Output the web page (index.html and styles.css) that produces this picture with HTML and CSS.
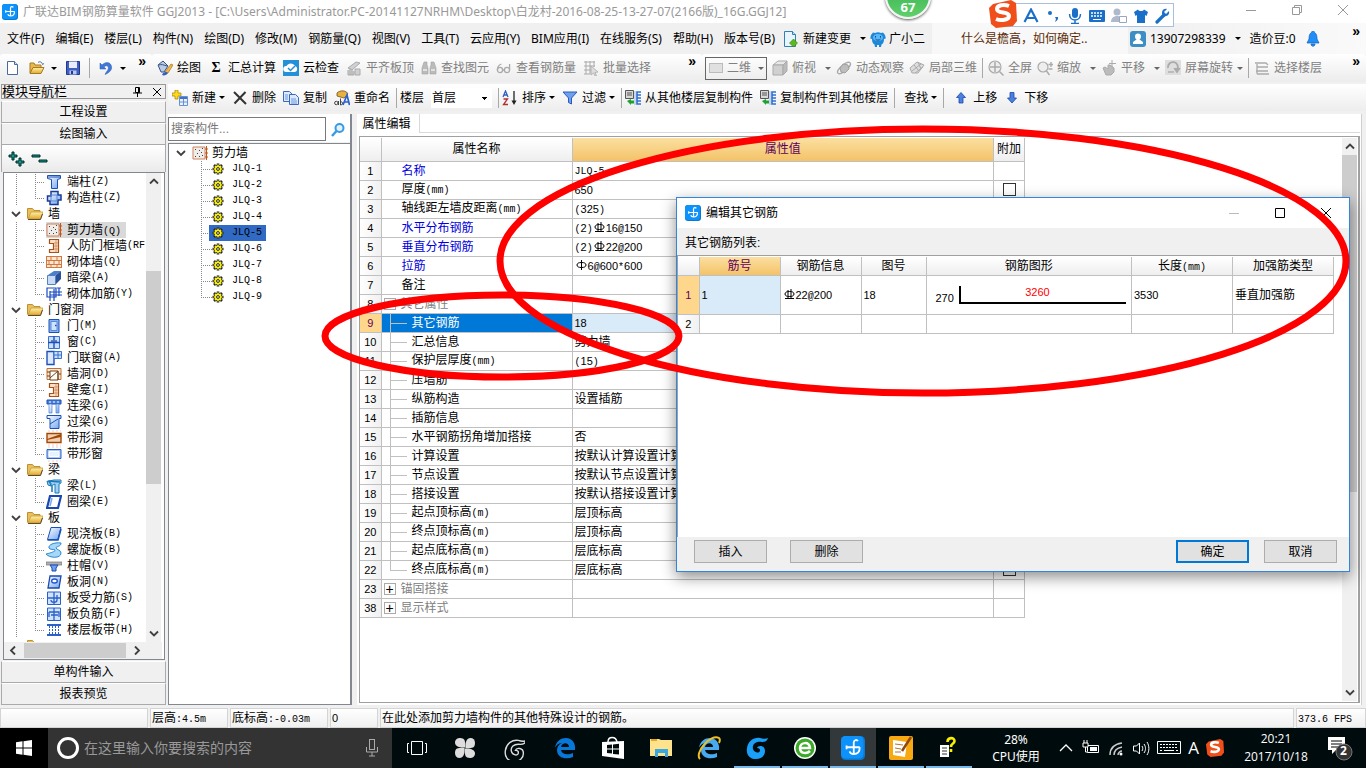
FILE: index.html
```html
<!DOCTYPE html>
<html lang="zh-CN">
<head>
<meta charset="utf-8">
<title>广联达BIM钢筋算量软件 GGJ2013</title>
<link rel="stylesheet" href="styles.css">
</head>
<body>
<svg class="defs" aria-hidden="true">
<defs>
<linearGradient id="blue" x1="0" y1="0" x2="1" y2="1"><stop offset="0" stop-color="#fff"/><stop offset="1" stop-color="#6ea4f0"/></linearGradient>
<linearGradient id="gold" x1="0" y1="0" x2="0" y2="1"><stop offset="0" stop-color="#fff0a8"/><stop offset="1" stop-color="#e3a82c"/></linearGradient>
</defs>
<symbol id="app" viewBox="0 0 16 16"><rect width="16" height="16" rx="3" fill="#0b78d0"/><rect width="15" height="15" rx="3" fill="#0c92fa"/><path d="M8.500 4v7.500M3.500 7.500h9M8.500 4c.3-1.500 2-1.800 2.800-.6M3.700 6.300v2.500M12.500 7.500c0 3-1.500 4.500-4 4.500-1.500 0-2.500-.6-2.700-1.800" fill="none" stroke="#fff" stroke-width="1.200"/></symbol>
<symbol id="new" viewBox="0 0 16 16"><path d="M2.500 1.500h7l3 3v10h-10z" fill="#fff" stroke="#4a6a9a"/><path d="M9.500 1.500v3h3" fill="#cfe0f5" stroke="#4a6a9a"/></symbol>
<symbol id="open" viewBox="0 0 16 16"><path d="M1 13V3h4l1 2h6v3" fill="#e8b84a" stroke="#a87a20"/><path d="M1 13.500l3-6h11l-3 6z" fill="url(#gold)" stroke="#a87a20"/><path d="M9 2.500c2-1.500 4-.5 4.500 2l1.500-1" fill="none" stroke="#4a6a9a"/></symbol>
<symbol id="folder" viewBox="0 0 16 16"><path d="M.5 12.500v-10h5l1.500 2h6v3" fill="#e8c060" stroke="#c09030"/><path d="M1 13l3-7h12l-2.500 7z" fill="url(#gold)" stroke="#c89a35" stroke-width=".8"/><path d="M1 13.500h12.500L15.500 8" fill="none" stroke="#4a3a20" stroke-width=".9"/></symbol>
<symbol id="save" viewBox="0 0 16 16"><path d="M1.500 1.500h13v13h-13z" fill="#4060c0" stroke="#203a90"/><path d="M4 1.500h8V8H4z" fill="#e8eefc"/><path d="M4.500 10.500h7v4h-7z" fill="#b8c8f0"/><path d="M6 11h2v3H6z" fill="#203a90"/></symbol>
<symbol id="undo" viewBox="0 0 16 16"><path d="M2 3v6h6L6 7c3-3 6 0 3.500 3.500C8.500 12 7.500 13 7 14.500 12 12.500 15 9 13 5 11 1.500 7 2 4 5z" fill="#3f78d8" stroke="#2858b0" stroke-width=".5"/></symbol>
<symbol id="paint" viewBox="0 0 16 16"><path d="M1 5l5-4 5 5-4 6H4z" fill="#b8cce8" stroke="#3a5080"/><path d="M2 5c2-1 5 0 8 1" stroke="#3a5080" fill="none"/><path d="M8 12l6-8 2 1-5 8z" fill="#f5b840" stroke="#906010" stroke-width=".6"/><path d="M5 15c1-3 4-4 6-2-1 2-4 3-6 2z" fill="#345fc0"/></symbol>
<symbol id="cloud" viewBox="0 0 16 16"><rect width="16" height="16" fill="#2490d8"/><path d="M3 12a3 3 0 01.5-6C5 2.500 10.500 2.500 12 6c3 .5 3 6-.5 6z" fill="#fff"/><path d="M5 8l2.500 2.500L12 6" fill="none" stroke="#2490d8" stroke-width="1.500"/></symbol>
<symbol id="gslab" viewBox="0 0 16 16"><path d="M2 8l8-6 4 1-8 7zM2 10v5h6v-4M9 9h5v6H9z" fill="#d0d0d0" stroke="#aaa"/><path d="M4 8v7M6 9v6" stroke="#aaa"/></symbol>
<symbol id="gbino" viewBox="0 0 16 16"><path d="M3 2h3v3l1 3v6H1V8zM10 2h3l2 6v6H9V8l1-3z" fill="#bbb" stroke="#a2a2a2" stroke-width=".6"/><path d="M2 10h4M10 10h4M7 7h2" stroke="#eee" stroke-width="1.500"/></symbol>
<symbol id="gglass" viewBox="0 0 16 16"><circle cx="4" cy="10" r="2.600" fill="none" stroke="#aaa" stroke-width="1.300"/><circle cx="11" cy="10" r="2.600" fill="none" stroke="#aaa" stroke-width="1.300"/><path d="M6.600 10h2M1.400 10c0-3 1-5 4-6M13.600 10V4" fill="none" stroke="#aaa" stroke-width="1.300"/></symbol>
<symbol id="ggrid" viewBox="0 0 16 16"><path d="M1 2h11M1 6h11M1 10h7M1 14h6M3 1v13M7 1v13M11 1v6" stroke="#aaa" fill="none"/><path d="M8 6l7 6-3 .5 1.500 3-1.500.5-1.500-3L8 15z" fill="#ddd" stroke="#aaa" stroke-width=".8"/></symbol>
<symbol id="gcube" viewBox="0 0 16 16"><path d="M1 5l5-4h9l-4 4z" fill="#e8e8e8" stroke="#aaa"/><path d="M1 5h10v10H1z" fill="#d0d0d0" stroke="#aaa"/><path d="M11 5l4-4v10l-4 4z" fill="#bbb" stroke="#aaa"/></symbol>
<symbol id="gorbit" viewBox="0 0 16 16"><ellipse cx="8" cy="8" rx="8" ry="3" transform="rotate(-40 8 8)" fill="none" stroke="#aaa" stroke-width="1.300"/><path d="M4 8l3-4 5 1 1 4-4 4-4-1z" fill="#bdbdbd" stroke="#a0a0a0"/></symbol>
<symbol id="gpart" viewBox="0 0 16 16"><path d="M1 8l7-6 7 3-6 8-6 0z" fill="#ddd" stroke="#aaa"/><path d="M5 5l5 6M9 2l3 7M3 11l9-7M6 13l8-6" stroke="#aaa"/></symbol>
<symbol id="gfull" viewBox="0 0 16 16"><circle cx="7" cy="7" r="6" fill="#eee" stroke="#aaa" stroke-width="1.200"/><path d="M7 2v10M2 7h10M11.500 11.500l4 4" stroke="#aaa" stroke-width="1.500"/></symbol>
<symbol id="gzoom" viewBox="0 0 16 16"><circle cx="6" cy="7" r="5" fill="#eee" stroke="#aaa" stroke-width="1.200"/><path d="M9.500 11l3 4M14 2v5M11.500 4.500h5M11.500 9h4" stroke="#aaa" stroke-width="1.400"/></symbol>
<symbol id="gpan" viewBox="0 0 16 16"><path d="M2 8l2-1 3 2V5h2l4 3v4l-3 3H5z" fill="#bbb" stroke="#aaa"/><path d="M11 0v7M8 3.500h7" stroke="#aaa"/></symbol>
<symbol id="grot" viewBox="0 0 16 16"><rect width="16" height="15" fill="#dedede"/><path d="M3 8a5 5 0 119 2M12 12l-2-3h4z" fill="none" stroke="#aaa" stroke-width="1.800"/><path d="M3 12h6" stroke="#999"/></symbol>
<symbol id="gfloor" viewBox="0 0 16 16"><path d="M1 3h11l2 2M3 7h11M2 11h12M3 14h12M3 4v10" stroke="#aaa" fill="none" stroke-width="1.300"/></symbol>
<symbol id="add" viewBox="0 0 16 16"><path d="M3 0h3v3h3v3H6v3H3V6H0V3h3z" fill="#ffd820" stroke="#a88000" stroke-width=".7"/><path d="M7.500 6.500h8v9h-8z" fill="#eaf2ff" stroke="#6a90d0"/><path d="M8 7h7v2H8z" fill="#3f70d0"/><path d="M8 12h7M11.500 9v6" stroke="#6a90d0"/></symbol>
<symbol id="del" viewBox="0 0 16 16"><path d="M2 2l12 12M13.500 2L2.500 13.500" stroke="#333" stroke-width="2"/></symbol>
<symbol id="copy" viewBox="0 0 16 16"><path d="M.5 1.500h6l3 3v7h-9z" fill="#dce9ff" stroke="#3a6ac0"/><path d="M6.500 4.500h6l3 3v7h-9z" fill="#dce9ff" stroke="#3a6ac0"/><path d="M8 9h5M8 11h6M8 13h6M2 5h3M2 7h3M2 9h3" stroke="#6a98e0"/></symbol>
<symbol id="ren" viewBox="0 0 16 16"><path d="M3 3c3-3 9-3 11 1l-4 4-7-2z" fill="#e8b040" stroke="#70501a" stroke-width=".8"/><circle cx="2.300" cy="13" r="1.700" fill="none" stroke="#444"/><path d="M4.500 11v4M6.500 8.500v6.500M6.500 12c2.500-1 3 3 0 3" fill="none" stroke="#444"/><path d="M9 15l4-10 2.500 10M10.500 12h4" fill="none" stroke="#2a60d0" stroke-width="1.700"/></symbol>
<symbol id="sort" viewBox="0 0 16 16"><path d="M1 7l2.500-6L6 7M2 5h3" fill="none" stroke="#2f5fc0" stroke-width="1.300"/><path d="M1.500 9h4l-4 5.500h4.500" fill="none" stroke="#b03030" stroke-width="1.300"/><path d="M12 1v12" stroke="#222" stroke-width="1.300"/><path d="M9.500 10.500h5L12 15z" fill="#222"/></symbol>
<symbol id="filter" viewBox="0 0 16 16"><path d="M1 2h14l-5.500 6v6l-3-1.500V8z" fill="#6fa0ec" stroke="#2a5ac0"/></symbol>
<symbol id="floorcp" viewBox="0 0 16 16"><path d="M.5.500h8v8h-8z" fill="#d8d8d8" stroke="#555"/><path d="M2 3h5M2 5h5" stroke="#555"/><path d="M16 2h-4v12h4M12 5h4M12 8h4M12 11h4" stroke="#2f70d0" fill="none" stroke-width="1.600"/><path d="M10 1v14" stroke="#9ab8e8"/><path d="M2 11l4-2v1.500h3v3H6V15z" fill="#20a030"/></symbol>
<symbol id="up" viewBox="0 0 16 16"><path d="M8 2.500l4.500 5H10V13H6V7.500H3.500z" fill="#4a80e0" stroke="#1a48a8" stroke-width=".8"/></symbol>
<symbol id="down" viewBox="0 0 16 16"><path d="M8 13l4.500-5H10V2.500H6V8H3.500z" fill="#4a80e0" stroke="#1a48a8" stroke-width=".8"/></symbol>
<symbol id="doc" viewBox="0 0 16 16"><path d="M1.500.5h8l3 3v12h-11z" fill="#e8f4ff" stroke="#3080b0"/><path d="M9.500.5v3h3" fill="#bfe0f5" stroke="#3080b0"/><path d="M10.500 8l4 4-4 4-4-4z" fill="#5cb81c" stroke="#2a8000" stroke-width=".6"/></symbol>
<symbol id="mascot" viewBox="0 0 16 16"><path d="M1 4l2-2.500L5 2c2-1 4-1 6 0l2-.5L15 4l.8 3.500L14 8c0 3-.8 4.500-2.500 5.500L11 16H9v-2H7v2H5l-.5-2.500C2.800 12.500 2 11 2 8L.2 7.500z" fill="#1e88d8"/><ellipse cx="8" cy="6.500" rx="5" ry="3.600" fill="#58b8f8"/><path d="M5.500 5v1.500M10.500 5v1.500M5.500 8c1 1.500 4 1.500 5 0" stroke="#104880" fill="none"/></symbol>
<symbol id="user" viewBox="0 0 16 16"><rect width="16" height="16" rx="3" fill="#3c8fc4"/><path d="M8 2.500a3 3 0 013 3c0 1.500-.8 2.500-1.500 3L13 11v2H3v-2l3.500-2.500C5.800 8 5 7 5 5.500a3 3 0 013-3z" fill="#fff"/></symbol>
<symbol id="bell" viewBox="0 0 16 16"><path d="M8 0c1 0 1.500.8 1.500 1.500C11.500 2.500 12 5 12 8l2 4H2l2-4c0-3 .5-5.500 2.500-6.500C6.500.8 7 0 8 0zM6 13h4c0 3-4 3-4 0z" fill="#2090f8" stroke="#1060b8" stroke-width=".7"/></symbol>
<symbol id="chev" viewBox="0 0 10 10"><path d="M1 3l4 4 4-4" fill="none" stroke="#404040" stroke-width="1.800"/></symbol>
<symbol id="wall" viewBox="0 0 16 16"><path d="M1 2h12v12H1z" fill="#f0ece8" stroke="#d08060"/><path d="M3 4h1v1H3zM7 5h1v1H7zM5 8h1v1H5zM9 7h1v1H9zM3 11h1v1H3zM7 11h1v1H7zM10 10h1v1h-1zM10 3h1v1h-1z" fill="#444"/><path d="M14.500 1v14M13 4h3M13 8h3M13 12h3" stroke="#c05818"/></symbol>
<symbol id="gear" viewBox="0 0 12 12"><path d="M6 .5v11M.5 6h11M2 2l8 8M10 2l-8 8" stroke="#222" stroke-width="2.600"/><circle cx="6" cy="6" r="4" fill="#f8f000" stroke="#333" stroke-width=".8"/><path d="M6 1.500v9M1.500 6h9M3 3l6 6M9 3l-6 6" stroke="#f8f000" stroke-width="1.200"/><circle cx="6" cy="6" r="1.400" fill="#fff" stroke="#222"/></symbol>
<symbol id="col" viewBox="0 0 16 16"><path d="M1.500 1.500h13v3l-3 1v9h-6v-9l-4-1z" fill="url(#blue)" stroke="#1a50b8"/><path d="M2 3h12" stroke="#1a50b8"/></symbol>
<symbol id="gz" viewBox="0 0 16 16"><path d="M5 1.500h7V5h3v5h-3v4.500H4V11H1.500V6H5z" fill="url(#blue)" stroke="#1a3a98" stroke-width="1.500"/><path d="M5 5h6v6H5z" fill="none" stroke="#5a88d8"/></symbol>
<symbol id="niche" viewBox="0 0 16 16"><path d="M3.500 1.500h9v13h-9v-3h4v-6h-4z" fill="#fbe0c8" stroke="#a85018" stroke-width="1.200"/><path d="M8 5h4M8 8h4M8 11h4M10 2v12" stroke="#d08048" stroke-width=".7"/></symbol>
<symbol id="brick" viewBox="0 0 16 16"><path d="M1 2h14v12H1z" fill="#fbe6d4"/><path d="M0 2.500h16M0 6.500h16M0 10.500h16M0 13.500h16M.5 2v12M15.500 2v12M5 2v4M11 2v4M3 6v4M8 6v4M13 6v4M5 10v4M11 10v4" stroke="#d07840"/></symbol>
<symbol id="hidden" viewBox="0 0 16 16"><path d="M2 5l6-4h7l-5 4z" fill="#4a80c8"/><path d="M1.500 5.500h8v9h-8z" fill="#c8dcf8" stroke="#5a80b8"/><path d="M10 5l5-4v8l-5 5z" fill="#2a5098"/></symbol>
<symbol id="rebar" viewBox="0 0 16 16"><path d="M1 2h9v9H1zM4 6h12M4 9h12M4 5v10M8 3v12M13 2v8M11 2h4" fill="none" stroke="#1848c0" stroke-width="1.200"/></symbol>
<symbol id="door" viewBox="0 0 16 16"><path d="M3 1.500h10v13H3z" fill="#88b4f4" stroke="#1a50b8"/><path d="M5 3.500h6v9H5z" fill="#d0e4ff" stroke="#5a88d8"/><path d="M9 7.500h1.500" stroke="#1a50b8" stroke-width="1.500"/></symbol>
<symbol id="win" viewBox="0 0 16 16"><path d="M2.500 2.500h11v12h-11z" fill="#c8dfff" stroke="#3a70d0"/><path d="M8 2v12M2 8.500h12" stroke="#1a50b8" stroke-width="1.400"/><path d="M6 6v2M10 6v2" stroke="#102060"/></symbol>
<symbol id="dwin" viewBox="0 0 16 16"><path d="M1 1.500h7v13H1z" fill="#dce9ff" stroke="#1a50b8" stroke-width="1.400"/><path d="M8 1.500h7.500v7H8zM12 1v8M8 5h8" fill="#c8dfff" stroke="#3a70d0"/></symbol>
<symbol id="hole" viewBox="0 0 16 16"><path d="M1 2.500h14v11H1z" fill="#fce8d4" stroke="#c07038"/><path d="M4 5h8v9H4z" fill="#fff" stroke="#704010"/><path d="M4 12l8-7v9M1 6h3M1 10h3M13 8h2" stroke="#704010" fill="none"/></symbol>
<symbol id="lbeam" viewBox="0 0 16 16"><path d="M1 2h14v4H1z" fill="#4a80d8" stroke="#1a50b8"/><path d="M3 6h3v9H3zM10 6h3v9h-3z" fill="url(#blue)" stroke="#4a80d8" stroke-width=".7"/><path d="M3 4h2M7 4h2M11 4h2" stroke="#fff"/></symbol>
<symbol id="gbeam" viewBox="0 0 16 16"><path d="M1 1.500h14v3h-2v10H4v-10H1z" fill="url(#blue)" stroke="#1a50b8"/><path d="M4 10l8-5" stroke="#1a50b8"/></symbol>
<symbol id="bhole" viewBox="0 0 16 16"><path d="M1 3.500h14v9H1z" fill="#f4d0b0" stroke="#a04808" stroke-width="1.400"/><path d="M1 9l14-5v3L1 10z" fill="#a04808"/><path d="M2 1h13M2 15h13" stroke="#f8c8c0" stroke-dasharray="2 2"/></symbol>
<symbol id="bwin" viewBox="0 0 16 16"><path d="M1 3.500h14v9H1z" fill="#a8c8f8" stroke="#2a60c8"/><path d="M3 5.500h10v5H3z" fill="#e8f2ff" stroke="#fff"/><path d="M2 1h13M2 15h13" stroke="#f8c8c0" stroke-dasharray="2 2"/></symbol>
<symbol id="beam" viewBox="0 0 16 16"><path d="M1 3l4 2v3l-3-1zM3 3l5-1h7v3l-2 1v9l-4 0V6L5 8z" fill="#9fd0f5" stroke="#1878b8"/><path d="M2 3l12 1M6 14V8" stroke="#1878b8" stroke-width="1.500"/></symbol>
<symbol id="ring" viewBox="0 0 16 16"><path d="M4 2h11l-3 12H1z" fill="#fff" stroke="#1a48b0" stroke-width="2.200"/><path d="M6 4l-2 8" stroke="#7aa8f0" stroke-width="1.500"/></symbol>
<symbol id="slab" viewBox="0 0 16 16"><path d="M5 1.500h10l-3 12H1.500z" fill="url(#blue)" stroke="#1a50b8"/><path d="M1.500 14h10.500L15 3" fill="none" stroke="#1a50b8" stroke-width="1.600"/></symbol>
<symbol id="spiral" viewBox="0 0 16 16"><path d="M15 1C8 0 2 3 3 6c1 2 5 1 6 2s-4 3-9 4c3 4 15 5 15-1 0-3-4-3-5-5 0-2 5-1 5-5z" fill="#a8d8f8" stroke="#2888d0"/></symbol>
<symbol id="cap" viewBox="0 0 16 16"><path d="M0 4h16v3H0z" fill="#b0b0b0" stroke="#777" stroke-width=".7"/><path d="M4 7h8l-2 3v3H6v-3z" fill="#70a0f0" stroke="#1a48b0"/></symbol>
<symbol id="shole" viewBox="0 0 16 16"><path d="M4 2h11l-2 12H2z" fill="url(#blue)" stroke="#1a48b0" stroke-width="1.300"/><ellipse cx="8.500" cy="7" rx="2.800" ry="2" fill="#fff" stroke="#1a50d0" stroke-width="1.300"/></symbol>
<symbol id="bar1" viewBox="0 0 16 16"><path d="M1.500 2h13v12.500h-13z" fill="#cfe2ff" stroke="#2a60c8"/><path d="M2 8h12M8 2v12M11 5v5c0 3-6 3-6 0" fill="none" stroke="#2a60c8" stroke-width="1.300"/></symbol>
<symbol id="bar2" viewBox="0 0 16 16"><path d="M1.500 2h13v12.500h-13z" fill="#cfe2ff" stroke="#2a60c8"/><path d="M8 2v12M3 6h10v5M3 6v5M5 9h7" fill="none" stroke="#2a60c8" stroke-width="1.300"/></symbol>
<symbol id="strip" viewBox="0 0 16 16"><path d="M1 3h14M1 13h14" stroke="#2a60c8" stroke-width="2"/><path d="M3.500 4v8M6.500 4v8M9.500 4v8M12.500 4v8" stroke="#2a60c8" stroke-dasharray="2 1"/></symbol>
<symbol id="r2" viewBox="0 0 11 11"><path d="M4 1v9M7 0v10M1 9.500h9" stroke="#000" fill="none"/><ellipse cx="5.500" cy="5" rx="4.500" ry="2.500" fill="none" stroke="#000"/></symbol>
<symbol id="r1" viewBox="0 0 11 11"><path d="M5.500 0v10" stroke="#000"/><ellipse cx="5.500" cy="5" rx="4.500" ry="2.500" fill="none" stroke="#000"/></symbol>
<symbol id="sogou" viewBox="0 0 28 28"><path d="M4 4l18-4 5 3 1 18-4 5-17 2-5-4L0 8z" fill="#f04f1c"/><path d="M20 6c-5-2-12-1-12 3 0 5 12 2 12 7 0 4-8 5-13 3" fill="none" stroke="#fff" stroke-width="4"/></symbol>
<symbol id="e" viewBox="0 0 24 24"><path d="M2 12C3 5 8 2 13 2c6 0 10 5 9 12H8c1 5 8 5 12 3v4c-7 3-16 1-16-7 0-3 2-6 5-7-5 0-7 5-7 5zm6-1h8c0-5-7-5-8 0z"/></symbol>
<symbol id="swirl" viewBox="0 0 24 24"><path d="M23 2c-1 3-3 4-6 4-7-1-10 3-9 7 1 4 7 5 7 1 0-1-1-2-3-2 1-3 8-3 8 3 0 5-4 8-9 8C4 23 1 18 2 12 3 5 9 1 15 2c3 1 6 1 8 0z"/></symbol>
</svg>

<div class="desk">
<header class="title">
  <svg class="i16"><use href="#app"/></svg>
  <h1>广联达BIM钢筋算量软件 GGJ2013 - [C:\Users\Administrator.PC-20141127NRHM\Desktop\白龙村-2016-08-25-13-27-07(2166版)_16G.GGJ12]</h1>
  <div class="wbtns">
    <button aria-label="最小化"><svg viewBox="0 0 12 12"><path d="M1 6.500h10" stroke="#999"/></svg></button>
    <button aria-label="还原"><svg viewBox="0 0 12 12"><path d="M1.500 3.500h7v7h-7zM3.500 3V1.500h7v7H9" fill="none" stroke="#999"/></svg></button>
    <button aria-label="关闭"><svg viewBox="0 0 12 12"><path d="M1 1l10 10M11 1L1 11" stroke="#999"/></svg></button>
  </div>
</header>

<nav class="menu">
  <button>文件(F)</button><button>编辑(E)</button><button>楼层(L)</button><button>构件(N)</button><button>绘图(D)</button><button>修改(M)</button><button>钢筋量(Q)</button><button>视图(V)</button><button>工具(T)</button><button>云应用(Y)</button><button>BIM应用(I)</button><button>在线服务(S)</button><button>帮助(H)</button><button>版本号(B)</button>
  <button class="tb change"><svg class="i16"><use href="#doc"/></svg>新建变更<b class="arr"></b></button>
  <button class="tb guang"><svg class="i16"><use href="#mascot"/></svg>广小二</button>
  <div class="tip"><a href="#">什么是檐高，如何确定..</a></div>
  <div class="acct">
    <button class="tb"><svg class="i16"><use href="#user"/></svg>13907298339<b class="arr"></b></button>
    <span>造价豆:0</span><svg class="i16"><use href="#bell"/></svg>
    <b class="more">»</b>
  </div>
</nav>

<div class="bar">
  <div class="grp g1">
    <button class="tb" aria-label="新建"><svg class="i16"><use href="#new"/></svg></button>
    <button class="tb" aria-label="打开"><svg class="i16"><use href="#open"/></svg><b class="arr"></b></button>
    <button class="tb" aria-label="保存"><svg class="i16"><use href="#save"/></svg></button><i class="sep"></i>
    <button class="tb" aria-label="撤销"><svg class="i16"><use href="#undo"/></svg><b class="arr"></b></button>
    <b class="more">»</b>
  </div>
  <div class="grp g2">
    <button class="tb"><svg class="i16"><use href="#paint"/></svg>绘图</button>
    <button class="tb"><b class="sigma">Σ</b>汇总计算</button>
    <button class="tb"><svg class="i16"><use href="#cloud"/></svg>云检查</button>
    <button class="tb off"><svg class="i16"><use href="#gslab"/></svg>平齐板顶</button>
    <button class="tb off"><svg class="i16"><use href="#gbino"/></svg>查找图元</button>
    <button class="tb off"><svg class="i16"><use href="#gglass"/></svg>查看钢筋量</button>
    <button class="tb off"><svg class="i16"><use href="#ggrid"/></svg>批量选择</button>
    <b class="more">»</b>
  </div>
  <div class="grp g3">
    <button class="tb off boxed"><i class="sheet"></i>二维<b class="arr"></b></button>
    <button class="tb off"><svg class="i16"><use href="#gcube"/></svg>俯视<b class="arr"></b></button>
    <button class="tb off"><svg class="i16"><use href="#gorbit"/></svg>动态观察</button>
    <button class="tb off"><svg class="i16"><use href="#gpart"/></svg>局部三维</button><i class="sep"></i>
    <button class="tb off"><svg class="i16"><use href="#gfull"/></svg>全屏</button>
    <button class="tb off"><svg class="i16"><use href="#gzoom"/></svg>缩放<b class="arr"></b></button>
    <button class="tb off"><svg class="i16"><use href="#gpan"/></svg>平移<b class="arr"></b></button>
    <button class="tb off tight"><svg class="i16"><use href="#grot"/></svg>屏幕旋转<b class="arr"></b></button><i class="sep"></i>
    <button class="tb off"><svg class="i16"><use href="#gfloor"/></svg>选择楼层</button>
    <b class="more">»</b>
  </div>
</div>

<main class="work">
<aside class="nav">
  <div class="navhead"><span>模块导航栏</span><svg viewBox="0 0 10 12"><path d="M2.500 1.500h4v5h-4zM5.500 1v6M0 7h9M4.500 7v4" fill="none" stroke="#000"/></svg><svg viewBox="0 0 10 12"><path d="M1 2l8 8M9 2l-8 8" stroke="#000"/></svg></div>
  <button class="sec">工程设置</button>
  <button class="sec">绘图输入</button>
  <div class="pm"><svg viewBox="0 0 44 16"><path d="M3 4h3V1h2v3h3v2H8v3H6V6H3z M10 10h3V7h2v3h3v2h-3v3h-2v-3h-3zM26 4h8v2h-8zM33 9h8v2h-8z" fill="#0a9a8a" stroke="#002a28"/></svg></div>
  <div class="treebox">
    <ul class="tree">
      <li class="c"><svg><use href="#col"/></svg>端柱<s>(Z)</s></li>
      <li class="c last"><svg><use href="#gz"/></svg>构造柱<s>(Z)</s></li>
      <li class="p"><svg class="cv"><use href="#chev"/></svg><svg><use href="#folder"/></svg>墙</li>
      <li class="c"><svg class="sel"><use href="#wall"/></svg><span class="cur">剪力墙<s>(Q)</s></span></li>
      <li class="c"><svg><use href="#niche"/></svg>人防门框墙<s>(RF</s></li>
      <li class="c"><svg><use href="#brick"/></svg>砌体墙<s>(Q)</s></li>
      <li class="c"><svg><use href="#hidden"/></svg>暗梁<s>(A)</s></li>
      <li class="c last"><svg><use href="#rebar"/></svg>砌体加筋<s>(Y)</s></li>
      <li class="p"><svg class="cv"><use href="#chev"/></svg><svg><use href="#folder"/></svg>门窗洞</li>
      <li class="c"><svg><use href="#door"/></svg>门<s>(M)</s></li>
      <li class="c"><svg><use href="#win"/></svg>窗<s>(C)</s></li>
      <li class="c"><svg><use href="#dwin"/></svg>门联窗<s>(A)</s></li>
      <li class="c"><svg><use href="#hole"/></svg>墙洞<s>(D)</s></li>
      <li class="c"><svg><use href="#niche"/></svg>壁龛<s>(I)</s></li>
      <li class="c"><svg><use href="#lbeam"/></svg>连梁<s>(G)</s></li>
      <li class="c"><svg><use href="#gbeam"/></svg>过梁<s>(G)</s></li>
      <li class="c"><svg><use href="#bhole"/></svg>带形洞</li>
      <li class="c last"><svg><use href="#bwin"/></svg>带形窗</li>
      <li class="p"><svg class="cv"><use href="#chev"/></svg><svg><use href="#folder"/></svg>梁</li>
      <li class="c"><svg><use href="#beam"/></svg>梁<s>(L)</s></li>
      <li class="c last"><svg><use href="#ring"/></svg>圈梁<s>(E)</s></li>
      <li class="p"><svg class="cv"><use href="#chev"/></svg><svg><use href="#folder"/></svg>板</li>
      <li class="c"><svg><use href="#slab"/></svg>现浇板<s>(B)</s></li>
      <li class="c"><svg><use href="#spiral"/></svg>螺旋板<s>(B)</s></li>
      <li class="c"><svg><use href="#cap"/></svg>柱帽<s>(V)</s></li>
      <li class="c"><svg><use href="#shole"/></svg>板洞<s>(N)</s></li>
      <li class="c"><svg><use href="#bar1"/></svg>板受力筋<s>(S)</s></li>
      <li class="c"><svg><use href="#bar2"/></svg>板负筋<s>(F)</s></li>
      <li class="c last"><svg><use href="#strip"/></svg>楼层板带<s>(H)</s></li>
      <li class="p"><svg class="cv"><use href="#chev"/></svg><svg><use href="#folder"/></svg></li>
    </ul>
    <div class="vs"><svg class="ar u"><use href="#chev"/></svg><i></i><svg class="ar"><use href="#chev"/></svg></div>
    <div class="hs"><svg class="ar l"><use href="#chev"/></svg><i></i><svg class="ar r"><use href="#chev"/></svg></div>
  </div>
  <button class="sec">单构件输入</button>
  <button class="sec">报表预览</button>
</aside>

<section class="right">
  <div class="bar3">
    <button class="tb"><svg class="i16"><use href="#add"/></svg>新建<b class="arr"></b></button>
    <button class="tb"><svg class="i16"><use href="#del"/></svg>删除</button>
    <button class="tb"><svg class="i16"><use href="#copy"/></svg>复制</button>
    <button class="tb"><svg class="i16"><use href="#ren"/></svg>重命名</button><i class="sep"></i>
    <label for="fl">楼层</label><select id="fl"><option>首层</option></select><i class="sep"></i>
    <button class="tb"><svg class="i16"><use href="#sort"/></svg>排序<b class="arr"></b></button>
    <button class="tb"><svg class="i16"><use href="#filter"/></svg>过滤<b class="arr"></b></button><i class="sep"></i>
    <button class="tb"><svg class="i16"><use href="#floorcp"/></svg>从其他楼层复制构件</button>
    <button class="tb"><svg class="i16"><use href="#floorcp"/></svg>复制构件到其他楼层</button><i class="sep"></i>
    <button class="tb pad">查找<b class="arr"></b></button><i class="sep"></i>
    <button class="tb pad"><svg class="i16"><use href="#up"/></svg>上移</button>
    <button class="tb"><svg class="i16"><use href="#down"/></svg>下移</button>
  </div>
  <div class="panes">
    <div class="comp">
      <div class="find"><input type="text" placeholder="搜索构件..." aria-label="搜索构件"><button aria-label="搜索"><svg viewBox="0 0 16 16"><circle cx="9.500" cy="6" r="4" fill="#e0f2ff" stroke="#3a9ae0" stroke-width="2"/><path d="M6.500 9l-4.500 5" stroke="#3a9ae0" stroke-width="2.500"/></svg></button></div>
      <ul class="ctree">
        <li class="root"><svg class="cv"><use href="#chev"/></svg><svg class="i16"><use href="#wall"/></svg>剪力墙</li>
        <li><svg><use href="#gear"/></svg><s>JLQ-1</s></li>
        <li><svg><use href="#gear"/></svg><s>JLQ-2</s></li>
        <li><svg><use href="#gear"/></svg><s>JLQ-3</s></li>
        <li><svg><use href="#gear"/></svg><s>JLQ-4</s></li>
        <li class="on"><span><svg><use href="#gear"/></svg><s>JLQ-5</s></span></li>
        <li><svg><use href="#gear"/></svg><s>JLQ-6</s></li>
        <li><svg><use href="#gear"/></svg><s>JLQ-7</s></li>
        <li><svg><use href="#gear"/></svg><s>JLQ-8</s></li>
        <li class="last"><svg><use href="#gear"/></svg><s>JLQ-9</s></li>
      </ul>
    </div>
    <div class="prop">
      <div class="tabs"><button>属性编辑</button></div>
      <div class="sheetbox">
      <table class="grid props">
        <colgroup><col class="w0"><col class="w1"><col class="w2"><col class="w3"></colgroup>
        <thead><tr><th></th><th>属性名称</th><th class="hot">属性值</th><th>附加</th></tr></thead>
        <tbody>
        <tr><th>1</th><td class="n k">名称</td><td><s>JLQ-5</s></td><td></td></tr>
        <tr><th>2</th><td class="n">厚度<s>(mm)</s></td><td><u>650</u></td><td><input type="checkbox" aria-label="附加 厚度"></td></tr>
        <tr><th>3</th><td class="n">轴线距左墙皮距离<s>(mm)</s></td><td><s>(</s><u>325</u><s>)</s></td><td><input type="checkbox" aria-label="附加 3"></td></tr>
        <tr><th>4</th><td class="n k">水平分布钢筋</td><td><s>(</s><u>2</u><s>)</s><svg class="rb"><use href="#r2"/></svg><u>16</u><s>@</s><u>150</u></td><td><input type="checkbox" aria-label="附加 4"></td></tr>
        <tr><th>5</th><td class="n k">垂直分布钢筋</td><td><s>(</s><u>2</u><s>)</s><svg class="rb"><use href="#r2"/></svg><u>22</u><s>@</s><u>200</u></td><td><input type="checkbox" aria-label="附加 5"></td></tr>
        <tr><th>6</th><td class="n k">拉筋</td><td><svg class="rb"><use href="#r1"/></svg><u>6</u><s>@</s><u>600</u><s>*</s><u>600</u></td><td><input type="checkbox" aria-label="附加 6"></td></tr>
        <tr><th>7</th><td class="n">备注</td><td></td><td><input type="checkbox" aria-label="附加 7"></td></tr>
        <tr><th>8</th><td class="g"><button class="ex" aria-label="收起">−</button>其它属性</td><td></td><td></td></tr>
        <tr class="act"><th>9</th><td class="b">其它钢筋</td><td><u>18</u></td><td></td></tr>
        <tr><th>10</th><td class="b">汇总信息</td><td>剪力墙</td><td><input type="checkbox" aria-label="附加 10"></td></tr>
        <tr><th>11</th><td class="b">保护层厚度<s>(mm)</s></td><td><s>(</s><u>15</u><s>)</s></td><td><input type="checkbox" aria-label="附加 11"></td></tr>
        <tr><th>12</th><td class="b">压墙筋</td><td></td><td><input type="checkbox" aria-label="附加 12"></td></tr>
        <tr><th>13</th><td class="b">纵筋构造</td><td>设置插筋</td><td><input type="checkbox" aria-label="附加 13"></td></tr>
        <tr><th>14</th><td class="b">插筋信息</td><td></td><td><input type="checkbox" aria-label="附加 14"></td></tr>
        <tr><th>15</th><td class="b">水平钢筋拐角增加搭接</td><td>否</td><td><input type="checkbox" aria-label="附加 15"></td></tr>
        <tr><th>16</th><td class="b">计算设置</td><td>按默认计算设置计算</td><td></td></tr>
        <tr><th>17</th><td class="b">节点设置</td><td>按默认节点设置计算</td><td></td></tr>
        <tr><th>18</th><td class="b">搭接设置</td><td>按默认搭接设置计算</td><td></td></tr>
        <tr><th>19</th><td class="b">起点顶标高<s>(m)</s></td><td>层顶标高</td><td><input type="checkbox" aria-label="附加 19"></td></tr>
        <tr><th>20</th><td class="b">终点顶标高<s>(m)</s></td><td>层顶标高</td><td><input type="checkbox" aria-label="附加 20"></td></tr>
        <tr><th>21</th><td class="b">起点底标高<s>(m)</s></td><td>层底标高</td><td><input type="checkbox" aria-label="附加 21"></td></tr>
        <tr><th>22</th><td class="b end">终点底标高<s>(m)</s></td><td>层底标高</td><td><input type="checkbox" aria-label="附加 22"></td></tr>
        <tr><th>23</th><td class="g"><button class="ex" aria-label="展开">+</button>锚固搭接</td><td></td><td></td></tr>
        <tr><th>38</th><td class="g"><button class="ex" aria-label="展开">+</button>显示样式</td><td></td><td></td></tr>
        </tbody>
      </table>
      <div class="vs big"><svg class="ar u"><use href="#chev"/></svg><i></i><svg class="ar"><use href="#chev"/></svg></div>
      </div>
    </div>
  </div>
</section>
</main>

<footer class="status"><span></span><span>层高<s>:4.5m</s></span><span>底标高<s>:-0.03m</s></span><span><u>0</u></span><span>在此处添加剪力墙构件的其他特殊设计的钢筋。</span><span><s>373.6 FPS</s></span></footer>

<footer class="task">
  <button class="start" aria-label="开始"><svg viewBox="0 0 16 16"><path d="M0 2.300L6.500 1.300v6.200H0zM7.500 1.200L16 0v7.500H7.500zM0 8.500h6.500v6.200L0 13.700zM7.500 8.500H16V16l-8.500-1.200z" fill="#fff"/></svg></button>
  <label class="search"><i class="ringo"></i><input type="text" placeholder="在这里输入你要搜索的内容"><svg viewBox="0 0 12 18"><rect x="3.500" y=".5" width="5" height="10" fill="none" stroke="#aaa"/><path d="M.5 8v5h11V8M6 13v4M3 17h6" fill="none" stroke="#aaa"/></svg></label>
  <div class="apps">
    <button aria-label="任务视图"><svg viewBox="0 0 24 24"><path d="M6.500 5.500h11v13h-11zM4 7.500H2.500v9H4M20 7.500h1.500v9H20" fill="none" stroke="#fff"/></svg></button>
    <button aria-label="应用"><svg viewBox="0 0 24 24"><g fill="#ddd"><path d="M12 11.500C8 12 2 11 2 6.500 2 1 10 1 11.500 4c.8 2 .8 5 .5 7.500z"/><path d="M12.500 12C12 8 13 2 17.500 2c5.500 0 5.500 8 2.500 9.500-2 .8-5 .8-7.500.5z"/><path d="M12 12.500c4-.5 10 .5 10 5 0 5.500-8 5.500-9.500 2.500-.8-2-.8-5-.5-7.500z"/><path d="M11.500 12c.5 4-.5 10-5 10C1 22 1 14 4 12.500c2-.8 5-.8 7.500-.5z"/></g></svg></button>
    <button class="gapr" aria-label="浏览器"><svg viewBox="-3 -3 30 30" fill="none" stroke="#ddd" stroke-width="1.400"><use href="#swirl"/></svg></button>
    <button aria-label="Edge"><svg viewBox="0 0 24 24" fill="#0878d8"><use href="#e"/></svg></button>
    <button aria-label="应用商店"><svg viewBox="0 0 24 24"><path d="M1 6l22-1v18L1 20z" fill="#fff"/><path d="M7 6c0-6 8-6 9 0" fill="none" stroke="#fff" stroke-width="1.500"/><path d="M6 9l5-.5v4H6zM12 8.400l6-.6v4.700h-6zM6 13.500h5v4l-5-.5zM12 13.500h6v5l-6-.6z" fill="#000b0d"/></svg></button>
    <button aria-label="资源管理器"><svg viewBox="0 0 24 24"><path d="M1 3h9l2 1h11v16H1z" fill="#ffe38c"/><path d="M2 4h6" stroke="#e8a820" stroke-width="2"/><path d="M6 13h13v8h-3v-4h-7v4H6z" fill="#3aa8e0"/></svg></button>
    <button aria-label="IE"><svg viewBox="0 0 24 24" fill="#4aaaf0"><use href="#e"/><path d="M3 23C-3 17 14-3 22 2c1 1 1 3 0 5" fill="none" stroke="#f0c020" stroke-width="2"/></svg></button>
    <button class="run" aria-label="广联达"><svg viewBox="0 0 24 24" fill="#1aa0f8"><use href="#swirl"/></svg></button>
    <button class="run" aria-label="360浏览器"><svg viewBox="0 0 24 24"><circle cx="12" cy="12" r="11" fill="#fff"/><circle cx="12" cy="12" r="9.500" fill="#3aaa28"/><path d="M6 12h11c0-7-10-6-10 0 0 6 7 6 10 3" fill="none" stroke="#fff" stroke-width="2.500"/></svg></button>
    <button class="run cura" aria-label="GGJ2013"><svg viewBox="0 0 16 16"><use href="#app"/></svg></button>
    <button class="run" aria-label="写字"><svg viewBox="0 0 24 24"><rect width="24" height="24" rx="2" fill="#f8a810"/><path d="M4 4l14 2-2 15-12-2z" fill="#fff"/><path d="M6 8l8 1M6 12l6 1M6 16l6 0" stroke="#b07828"/><path d="M22 1l-9 14" stroke="#904810" stroke-width="2.500"/></svg></button>
    <button class="run" aria-label="加密锁"><svg viewBox="0 0 24 24"><path d="M3 9h9v12H3z" fill="#fff"/><path d="M5 12h5M5 15h5M5 18h5" stroke="#333"/><path d="M10.500 6c0-5 7-5 7-1 0 3-3.500 2-3.500 6M14 13v3" fill="none" stroke="#f8f000" stroke-width="2.600"/></svg></button>
  </div>
  <div class="cpu">28%<br>CPU使用</div>
  <div class="tray">
    <svg viewBox="0 0 18 18"><path d="M3 12l6-6 6 6" fill="none" stroke="#fff" stroke-width="1.300"/></svg>
    <svg viewBox="0 0 18 18"><path d="M5.500 6.500h11v7h-11z" fill="none" stroke="#fff"/><path d="M8 8h7v4H8z" fill="#fff"/><path d="M1 4h5v4H1zM2 1v3M5 1v3M3.500 8v5h2" stroke="#fff" fill="#000"/></svg>
    <svg viewBox="0 0 18 18"><path d="M3 16C3 9 8 5 15 4M7 16c0-4 3-7 8-8M11 16c0-2 2-4 4-4" fill="none" stroke="#ccc" stroke-width="1.500"/><circle cx="14" cy="15" r="1.500" fill="#fff"/></svg>
    <svg viewBox="0 0 18 18"><path d="M1.500 7h3l3-3v11l-3-3h-3zM10 7c1 1.500 1 3.500 0 5M12 5c2 3 2 6 0 9M15 3c2.500 4 2.500 9 0 13" fill="none" stroke="#fff"/></svg>
    <svg class="kb" viewBox="0 0 24 18"><path d="M.5 2.500h23v12H.500z" fill="none" stroke="#fff"/><path d="M3 5.500h18M3 8.500h18" stroke="#fff" stroke-dasharray="2 1"/><path d="M3 11.500h2M7 11.500h10M19 11.500h2" stroke="#fff"/></svg>
    <b>A</b>
    <svg viewBox="0 0 28 28"><use href="#sogou"/></svg>
  </div>
  <div class="clock">20:21<br>2017/10/18</div>
  <button class="note" aria-label="通知"><svg viewBox="0 0 26 26"><path d="M1 2h17v13h-9l-4 4v-4H1z" fill="#fff"/><path d="M4 6h11M4 9h11M4 12h8" stroke="#000"/><circle cx="17" cy="17" r="8" fill="#333" stroke="#777"/></svg><b>2</b></button>
</footer>

<div class="ball">67</div>
<div class="ime">
  <svg class="big" viewBox="0 0 28 28"><use href="#sogou"/></svg>
  <svg viewBox="0 0 16 16"><path d="M1.500 14L8 1.500 14.500 14M4 10h8" fill="none" stroke="#1a70c8" stroke-width="2.200"/></svg>
  <svg viewBox="0 0 16 16"><circle cx="5" cy="5" r="2" fill="#1a70c8"/><path d="M10 9h3c.5 2-1 4-3 5l1-3z" fill="#1a70c8"/></svg>
  <svg viewBox="0 0 16 16"><rect x="5" y="0" width="6" height="10" rx="3" fill="#1a70c8"/><path d="M2.500 6c0 8 11 8 11 0M8 12v3M4 15.500h8" fill="none" stroke="#1a70c8" stroke-width="1.500"/></svg>
  <svg viewBox="0 0 16 16"><rect y="2" width="16" height="12" rx="1" fill="#1a70c8"/><path d="M2 5h12M2 8h12" stroke="#fff" stroke-width="1.500" stroke-dasharray="2 1"/><path d="M4 11.500h8" stroke="#fff"/></svg>
  <svg viewBox="0 0 16 16"><circle cx="6" cy="4" r="3.500" fill="#b0b8cc"/><path d="M0 14c0-8 12-8 12 0z" fill="#b0b8cc"/><path d="M8.500 8.500h7v6h-7z" fill="#fff" stroke="#9aa6c0"/></svg>
  <svg viewBox="0 0 16 16"><path d="M1 4l4-2.500c1 2 5 2 6 0L15 4l-1.500 4L12 7v8H4V7L2.500 8z" fill="#1a70c8"/></svg>
  <svg viewBox="0 0 16 16"><path d="M2 14l7-7" stroke="#1a70c8" stroke-width="3.200" stroke-linecap="round"/><path d="M14 3l-3 3-2-2 3-3c-4-1-6 3-4.500 6C10 9.500 15 8 14 3z" fill="#1a70c8"/></svg>
</div>

<section class="dlg" role="dialog" aria-label="编辑其它钢筋">
  <div class="dt"><svg class="i16"><use href="#app"/></svg><h2>编辑其它钢筋</h2>
    <button aria-label="最小化"><svg viewBox="0 0 12 12"><path d="M1 6.500h10" stroke="#bbb"/></svg></button>
    <button aria-label="最大化"><svg viewBox="0 0 12 12"><path d="M1.500 1.500h9v9h-9z" fill="none" stroke="#000"/></svg></button>
    <button aria-label="关闭"><svg viewBox="0 0 12 12"><path d="M1 1l10 10M11 1L1 11" stroke="#000"/></svg></button>
  </div>
  <p>其它钢筋列表:</p>
  <div class="dbody">
    <table class="grid dg">
      <colgroup><col class="d0"><col class="d1"><col class="d1"><col class="d3"><col><col class="d5"><col class="d5"></colgroup>
      <thead><tr><th></th><th class="hot">筋号</th><th>钢筋信息</th><th>图号</th><th>钢筋图形</th><th>长度<s>(mm)</s></th><th>加强筋类型</th></tr></thead>
      <tbody>
      <tr class="act tall"><th>1</th><td class="cell"><u>1</u></td><td><svg class="rb"><use href="#r2"/></svg><u>22</u><s>@</s><u>200</u></td><td><u>18</u></td><td><div class="shape"><u>270</u><span><u>3260</u></span></div></td><td><u>3530</u></td><td>垂直加强筋</td></tr>
      <tr><th>2</th><td></td><td></td><td></td><td></td><td></td><td></td></tr>
      </tbody>
    </table>
  </div>
  <div class="df"><button>插入</button><button>删除</button><button class="ok">确定</button><button>取消</button></div>
</section>
<svg class="marks" aria-hidden="true"><ellipse cx="923" cy="261" rx="423" ry="132"/><ellipse cx="502" cy="336" rx="177" ry="41"/></svg>
</div>
</body>
</html>
```
FILE: styles.css
```css
* { box-sizing: border-box; }
body { margin: 0; background: #f0f0f0; color: #000; font: 12px/16px "Noto Sans", "Noto Sans CJK SC", sans-serif; overflow: hidden; }
button, input, select { font: inherit; color: inherit; padding: 0; margin: 0; border: 0; background: none; }
svg { display: block; flex: none; }
h1, h2, p, ul { margin: 0; padding: 0; font-size: 12px; font-weight: 400; list-style: none; }
s { font: 10px/12px "Liberation Mono", monospace; text-decoration: none; }
u { font: 11px/12px "Liberation Sans", sans-serif; text-decoration: none; }
.defs { position: absolute; width: 0; height: 0; }
.desk { position: relative; height: 100vh; display: flex; flex-direction: column; white-space: nowrap; }
.i16 { width: 16px; height: 16px; }

/* title bar */
.title { height: 23px; flex: none; background: #fff; display: flex; align-items: center; gap: 5px; padding-left: 2px; color: #999; }
.wbtns { margin-left: auto; display: flex; align-self: flex-start; }
.wbtns button { width: 46px; height: 20px; display: grid; place-items: center; }
.wbtns svg { width: 12px; height: 12px; }

/* menu bar */
.menu { height: 31px; flex: none; display: flex; align-items: center; gap: 11px; padding-left: 7px; background: #f0f0f0; }
.tb { display: flex; align-items: center; gap: 4px; }
.arr { width: 6px; margin-left: 5px; border: 3px solid transparent; border-top-color: currentColor; border-bottom: 0; }
.more { font: bold 14px/14px "Liberation Sans", sans-serif; align-self: flex-start; }
.change { margin-left: -3px; }
.guang { margin-left: -7px; gap: 3px; }
.tip { flex: 1; align-self: stretch; display: flex; align-items: center; padding-left: 29px; margin-left: -4px; background: #f8f8f8; }
.tip a { color: #5c2c08; text-decoration: none; }
.acct { width: 236px; margin-left: -9px; align-self: stretch; display: flex; align-items: center; gap: 9px; background: linear-gradient(90deg, #f0f0f0, #fafafa); }
.acct .more { margin: 1px 6px 0 auto; }

/* tool bars */
.bar { height: 30px; flex: none; display: flex; background: #f0f0f0; }
.grp { height: 28px; display: flex; align-items: center; gap: 7px; padding-left: 5px; background: linear-gradient(#fff, #ececec); border-radius: 3px; }
.g1 { width: 152px; gap: 8px; }
.g1 .arr { margin-left: 2px; }
.g2 { width: 550px; }
.g2 > .more, .g3 > .more { margin-left: auto; }
.g3 { flex: 1; padding-left: 3px; gap: 5px; }
.grp .more { margin-top: 0; margin-right: 6px; }
.g1 .more { margin-left: auto; }
.sep { width: 1px; height: 20px; background: #a8a8a8; flex: none; }
.sigma { width: 16px; text-align: center; font: bold 14px/16px "Liberation Serif", serif; }
.off { color: #808080; }
.off .arr { color: #666; }
.tight .arr { margin-left: 0; }
.boxed { border: 1px solid #666; height: 23px; width: 62px; padding-left: 3px; }
.sheet { width: 14px; height: 10px; background: #e0e0e0; border: 1px solid #bbb; }
.boxed .arr { margin-left: 3px; }

/* work area */
.work { flex: 1; min-height: 0; display: grid; grid-template-columns: 166px 1fr; }
.nav { display: flex; flex-direction: column; min-height: 0; padding: 0 0 3px 1px; font-family: "Liberation Sans", "Noto Sans CJK SC", sans-serif; }
.navhead { height: 15px; flex: none; display: flex; align-items: center; gap: 9px; border: 1px solid #999; padding-right: 3px; margin-bottom: 2px; font-size: 13px; }
.navhead span { flex: 1; }
.navhead svg { width: 10px; height: 12px; }
.sec { height: 22px; flex: none; border: 1px solid #aaa; border-top-color: #fff; background: #f0f0f0; text-align: center; }
.pm { height: 27px; flex: none; display: flex; align-items: center; padding-left: 4px; border: 1px solid #aaa; border-width: 0 1px; background: linear-gradient(#fff, #eaeaea); }
.pm svg { width: 44px; height: 16px; }
.treebox { flex: 1; min-height: 0; margin: 0 1px 1px 2px; border: 1px solid #828790; background: #fff; display: grid; grid-template: 1fr 17px / 1fr 18px; }
.tree { overflow: hidden; padding-top: 1px; min-height: 0; min-width: 0; }
.tree li, .ctree li { height: 16px; display: flex; align-items: center; }
.tree li > svg { width: 16px; height: 16px; }
.tree .c { padding-left: 42px; background: repeating-linear-gradient(#888 0 1px, transparent 1px 2px) 12px 0 / 1px 16px no-repeat, repeating-linear-gradient(#888 0 1px, transparent 1px 2px) 31px 0 / 1px 16px no-repeat, repeating-linear-gradient(90deg, #888 0 1px, transparent 1px 2px) 31px 8px / 10px 1px no-repeat; }
.tree .last { background-size: 1px 16px, 1px 8px, 10px 1px; }
.tree .c > svg { margin-right: 5px; }
.tree .c > .sel { background-color: #d9d9d9; }
.tree .cur { background: #d9d9d9; padding: 0 5px; margin-left: -5px; line-height: 16px; }
.tree .p { padding-left: 7px; }
.tree li > .cv, .ctree .cv { width: 10px; height: 10px; margin-right: 6px; }
.tree .p > svg + svg { margin-right: 5px; }
.vs { display: flex; flex-direction: column; align-items: center; background: #f0f0f0; width: 15px; }
.vs i { width: 15px; height: 213px; background: #cdcdcd; margin: 81px 0 auto; }
.ar { width: 10px; height: 17px; padding: 3px 0; }
.u { transform: rotate(180deg); } .l { transform: rotate(90deg); } .r { transform: rotate(-90deg); }
.hs { grid-column: 1 / 3; display: flex; align-items: center; background: #f0f0f0; padding: 0 20px 0 4px; margin-right: 2px; justify-content: space-between; }
.hs i { width: 102px; height: 15px; background: #cdcdcd; }

.right { display: flex; flex-direction: column; min-width: 0; min-height: 0; }
.bar3 { height: 27px; flex: none; display: flex; align-items: center; gap: 7px; padding-left: 4px; margin-left: 2px; background: linear-gradient(#fff, #ededed); }
.bar3 .arr { margin-left: -1px; }
.bar3 .sep { margin: 0 -4px 0 -1px; }
.bar3 .pad { padding-left: 6px; }
.bar3 select { width: 61px; height: 20px; appearance: none; padding-left: 1px; background: #fff linear-gradient(45deg, transparent 50%, #000 50%) 51px 9px / 3px 3px no-repeat; background-image: linear-gradient(45deg, transparent 50%, #000 50%), linear-gradient(-45deg, transparent 50%, #000 50%); background-position: 51px 7px, 54px 7px; background-image: conic-gradient(from -45deg at 50% 100%, #000 90deg, transparent 0); background-size: 6px 3px; background-position: 50px 9px; }
.panes { flex: 1; min-height: 0; display: grid; grid-template-columns: 184px 1fr; gap: 5px; padding: 3px 4px 3px 2px; }
.comp { display: flex; flex-direction: column; font-family: "Liberation Sans", "Noto Sans CJK SC", sans-serif; border-right: 2px solid #828790; }
.find { display: flex; height: 28px; padding-top: 3px; background: #fff; }
.find input { flex: 1; min-width: 0; height: 24px; border: 1px solid #7a7a7a; padding: 0 2px; background: #fff; }
.find input::placeholder { color: #777; }
.find button { width: 24px; display: grid; place-items: center; }
.find svg { width: 16px; height: 16px; }
.ctree { flex: 1; background: #fff; border: 1px solid #828790; border-right: 0; padding-top: 1px; margin-top: 1px; }
.ctree li { padding-left: 43px; background: repeating-linear-gradient(#888 0 1px, transparent 1px 2px) 32px 0 / 1px 16px no-repeat, repeating-linear-gradient(90deg, #888 0 1px, transparent 1px 2px) 32px 8px / 11px 1px no-repeat; }
.ctree .last { background-size: 1px 8px, 11px 1px; }
.ctree .root { padding-left: 7px; background: none; }
.ctree .root .i16 { margin-right: 4px; }
.ctree li svg:not(.cv):not(.i16) { width: 12px; height: 12px; margin-right: 8px; }
.ctree .on span { display: flex; align-items: center; background: #316ac5; height: 16px; margin-left: -3px; padding: 0 4px 0 3px; }
.ctree s, .props td > s:only-child { line-height: 16px; }

.prop { background: #fff; display: flex; flex-direction: column; min-width: 0; min-height: 0; padding: 0 1px 2px 2px; border-right: 1px solid #d0d0d0; font-family: "Liberation Sans", "Noto Sans CJK SC", sans-serif; }
.tabs { height: 19px; border-bottom: 1px solid #d9d9d9; flex: none; }
.tabs button { height: 19px; width: 61px; padding-right: 5px; background: #fff; border-right: 1px solid #d9d9d9; }
.sheetbox { flex: 1; min-height: 0; margin-top: 3px; border: 1px solid #a0a0a0; border-right: 2px solid #a0a0a0; display: flex; justify-content: space-between; padding: 1px 1px 1px 0; }
.grid { border-collapse: collapse; table-layout: fixed; height: min-content; }
.grid th, .grid td { border: 1px solid #c0c0c0; padding: 0; height: 19px; line-height: 16px; font-weight: 400; overflow: hidden; }
.grid th { background: linear-gradient(90deg, #fff, #f0f0f0); }
.grid thead th { background: linear-gradient(#fff, #eee); border-top: 0; }
.grid tbody th { font: 11px/16px "Liberation Sans", sans-serif; }
.grid thead .hot { background: linear-gradient(#fbdfa0, #f3c268); color: #600060; }
.grid th:first-child { border-left: 0; }
.props { width: 665px; }
.props thead th { height: 23px; }
.w0 { width: 21px; } .w1 { width: 191px; } .w3 { width: 31px; }
.grid td { padding-left: 2px; }
.props td.n { padding-left: 20px; }
.props td.k { color: #0000e0; }
.props td.g { color: #808080; padding-left: 2px; }
.props td.b { padding-left: 30px; background: linear-gradient(#c0c0c0, #c0c0c0) 8px 0 / 1px 100% no-repeat, linear-gradient(#c0c0c0, #c0c0c0) 8px 9px / 17px 1px no-repeat; }
.props td.end { background-size: 1px 9px, 17px 1px; }
.props tr.act td.b { background-color: #0078d7; color: #fff; }
.grid .act > th { background: #ffd78c; color: #600060; }
.act td + td, .act .cell { background: #d9eaf8; }
.dg .act td + td { background: #fff; }
.ex { width: 12px; height: 12px; border: 1px solid #aaa; background: #fff; color: #000; font: 14px/10px "Liberation Sans", sans-serif; margin-right: 5px; vertical-align: -1px; }
.props input { appearance: none; display: block; width: 13px; height: 13px; border: 1px solid #333; background: #fff; margin: 0 0 0 7px; }
.rb { display: inline-block; width: 11px; height: 11px; vertical-align: -1px; margin: 0 1px; }
.big i { height: 337px; margin: 0 0 auto; }

/* status */
.status { height: 20px; flex: none; display: grid; grid-template-columns: 148px 78px 98px 48px 1fr 70px; gap: 2px; font-family: "Liberation Sans", "Noto Sans CJK SC", sans-serif; }
.status span { border: 1px solid #d4d4d4; background: linear-gradient(#fff, #f0f0f0); padding: 1px; }

/* task bar */
.task { height: 40px; flex: none; background: #000b0d; color: #fff; display: flex; }
.start { width: 48px; background: #000; display: grid; place-items: center; }
.start svg { width: 16px; height: 16px; }
.search { width: 344px; background: #333; display: flex; align-items: center; gap: 5px; padding: 0 14px 0 9px; }
.search input { flex: 1; min-width: 0; font-size: 14px; }
.search input::placeholder { color: #999; opacity: 1; }
.search svg { width: 12px; height: 18px; }
.ringo { width: 22px; height: 22px; border: 3px solid #fff; border-radius: 50%; }
.apps { display: flex; gap: 2px; padding-left: 2px; }
.apps button { width: 46px; display: grid; place-items: center; }
.apps .gapr { margin-right: 4px; }
.apps svg { width: 24px; height: 24px; }
.run { box-shadow: inset 0 -2px #76b9ed; }
.apps .cura { background: #33393b; }
.cpu { margin-left: 14px; width: 60px; text-align: center; line-height: 17px; padding-top: 3px; }
.tray { flex: 1; display: flex; align-items: center; justify-content: space-between; padding: 0 14px 0 11px; }
.tray svg { width: 18px; height: 18px; }
.tray .kb { width: 24px; }
.tray b { font: 17px/18px "Open Sans", sans-serif; }
.clock { width: 76px; text-align: center; line-height: 18px; padding-top: 2px; font-family: "Open Sans", sans-serif; }
.note { width: 52px; position: relative; display: grid; place-items: center; }
.note svg { width: 26px; height: 26px; }
.note b { position: absolute; left: 26px; top: 15px; font-size: 12px; }

/* overlays */
.ball { position: absolute; left: 885px; top: -27px; width: 46px; height: 46px; border-radius: 50%; background: linear-gradient(#2fa84f, #5fd06a); border: 2px solid #f4f4f4; box-shadow: 0 1px 3px #555; color: #fff; font: bold 13px/16px "Open Sans", sans-serif; text-align: center; padding-top: 24px; }
.ime { position: absolute; isolation: isolate; left: 989px; top: 0; width: 185px; height: 27px; display: flex; align-items: center; gap: 6px; }
.ime::before { content: ""; position: absolute; z-index: -1; left: 12px; right: 0; top: 3px; bottom: 0; background: #fff; border: 1px solid #a8c0dc; }
.ime svg { width: 16px; height: 16px; margin-top: 4px; }
.ime .big { width: 28px; height: 28px; margin: 0; }
.dlg { position: absolute; left: 676px; top: 197px; width: 674px; height: 375px; border: 1px solid #2f86dc; background: #f0f0f0; box-shadow: 0 5px 14px rgba(0,0,0,.45); display: flex; flex-direction: column; font-family: "Liberation Sans", "Noto Sans CJK SC", sans-serif; }
.dt { height: 30px; background: #fff; display: flex; align-items: center; padding-left: 8px; }
.dt h2 { margin: 0 auto 0 5px; }
.dt button { width: 46px; height: 28px; display: grid; place-items: center; }
.dt button svg { width: 12px; height: 12px; }
.dlg p { height: 27px; line-height: 30px; padding-left: 8px; }
.dbody { flex: 1; background: #fff; border: 1px solid #a0a0a0; border-width: 1px 0 0 1px; padding: 1px 1px 1px 0; }
.dg { width: 656px; }
.dg thead th { height: 18px; }
.dg .tall td { height: 39px; }
.d0 { width: 21px; } .d1 { width: 81px; } .d3 { width: 65px; } .d5 { width: 101px; }
.shape { display: flex; align-items: flex-end; gap: 5px; padding: 0 5px 0 7px; }
.shape span { flex: 1; height: 18px; border: solid #000; border-width: 0 0 2px 2px; text-align: center; color: #f00; line-height: 10px; padding-right: 12px; }
.df { height: 34px; display: flex; gap: 23px; padding: 3px 12px 0 17px; }
.df button { width: 73px; height: 23px; background: #e1e1e1; border: 1px solid #adadad; }
.df .ok { margin-left: auto; border: 2px solid #0078d7; }
.df .ok + button { margin-left: -8px; }
.marks { position: absolute; inset: 0; width: 100%; height: 100%; pointer-events: none; fill: none; stroke: #f00; stroke-width: 7; }
```
